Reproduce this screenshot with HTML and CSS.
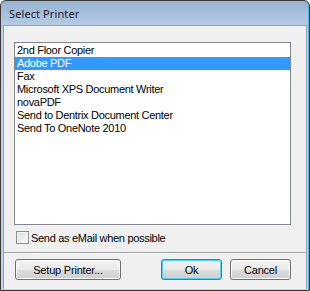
FILE: index.html
```html
<!DOCTYPE html>
<html>
    <head>
        <meta charset="UTF-8">
        <title>Select Printer</title>
        <link rel="stylesheet" href="styles.css">
    </head>
    <body>
        <div class="window">
            <div class="titlebar">Select Printer</div>
            <div class="client">
                <div class="listbox">
                    <div class="item">2nd Floor Copier</div>
                    <div class="item selected">Adobe PDF</div>
                    <div class="item">Fax</div>
                    <div class="item">Microsoft XPS Document Writer</div>
                    <div class="item">novaPDF</div>
                    <div class="item">Send to Dentrix Document Center</div>
                    <div class="item">Send To OneNote 2010</div>
                </div>
                <label class="check">
                    <span class="box"></span>
                    <span>Send as eMail when possible</span>
                </label>
                <div class="separator"></div>
                <div class="buttons">
                    <button class="btn setup">Setup Printer...</button>
                    <div class="spacer"></div>
                    <button class="btn ok default">Ok</button>
                    <button class="btn cancel">Cancel</button>
                </div>
            </div>
        </div>
    </body>
</html>
```

FILE: styles.css
```css
body {
    margin: 0;
    padding: 0;
    background-color: #ffffff;
    font-family: "Liberation Sans", Arial, sans-serif;
}
.window {
    width: 310px;
    height: 291px;
    box-sizing: border-box;
    border: 1px solid #3a3a3a;
    border-radius: 6px 6px 0 0;
    background: linear-gradient(#9ab3d0, #b9d1ea 30px, #bcd4ec);
    padding: 0 2px 1px 2px;
    display: flex;
    flex-direction: column;
    box-shadow: inset -1px 0 0 #3fb8ee;
}
.titlebar {
    height: 24px;
    line-height: 26px;
    padding-left: 6px;
    font-family: "Noto Sans", sans-serif;
    font-size: 11px;
    letter-spacing: 0.1px;
    color: #1b1b2b;
}
.client {
    flex: 1;
    background-color: #f0f0f0;
    border: 1px solid #8ea4bd;
    border-bottom: none;
    display: flex;
    flex-direction: column;
    padding: 16px 15px 0 10px;
    font-size: 11px;
    letter-spacing: -0.3px;
    color: #000;
}
.listbox {
    height: 183px;
    box-sizing: border-box;
    border: 1px solid #828790;
    background-color: #ffffff;
    padding-top: 1px;
}
.item {
    height: 13px;
    line-height: 13px;
    padding-left: 2px;
    white-space: nowrap;
}
.item.selected {
    background-color: #3399ff;
    color: #ffffff;
}
.check {
    display: flex;
    align-items: center;
    margin-top: 6px;
    margin-left: 2px;
    height: 13px;
}
.box {
    width: 11px;
    height: 11px;
    border: 1px solid #8e8f8f;
    background: linear-gradient(135deg, #dcdcdc, #fbfbfb);
    margin-right: 2px;
    box-shadow: inset 0 0 0 1px #f4f4f4;
}
.separator {
    margin: 8px -15px 0 -10px;
    border-top: 1px solid #a0a0a0;
    border-bottom: 1px solid #ffffff;
}
.buttons {
    display: flex;
    margin-top: 5px;
    margin-left: 1px;
}
.spacer {
    flex: 1;
}
.btn {
    height: 21px;
    box-sizing: border-box;
    border: 1px solid #707070;
    border-radius: 3px;
    background: linear-gradient(#f2f2f2, #ebebeb 50%, #dddddd 50%, #cfcfcf);
    box-shadow: inset 0 0 0 1px #fcfcfc;
    font-family: "Liberation Sans", Arial, sans-serif;
    font-size: 11px;
    letter-spacing: -0.2px;
    color: #000;
    padding: 0;
}
.setup {
    width: 106px;
}
.ok {
    width: 61px;
    margin-right: 8px;
}
.cancel {
    width: 61px;
}
.btn.default {
    border-color: #3c7fb1;
    box-shadow: inset 0 0 0 1px #48d4f8;
}
```
